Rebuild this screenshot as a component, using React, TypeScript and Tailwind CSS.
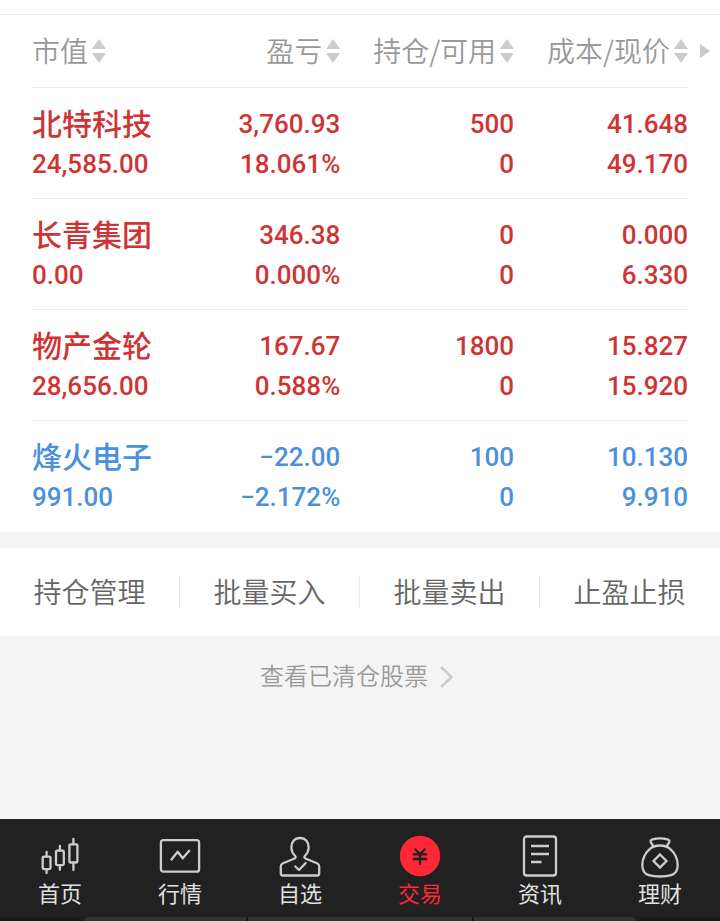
import type { ReactNode } from "react";

type Pair = [string, string];

interface Holding {
  name: string;
  value: string;
  profit: Pair;
  position: Pair;
  price: Pair;
  down?: boolean;
}

const holdings: Holding[] = [
  { name: "北特科技", value: "24,585.00", profit: ["3,760.93", "18.061%"], position: ["500", "0"], price: ["41.648", "49.170"] },
  { name: "长青集团", value: "0.00", profit: ["346.38", "0.000%"], position: ["0", "0"], price: ["0.000", "6.330"] },
  { name: "物产金轮", value: "28,656.00", profit: ["167.67", "0.588%"], position: ["1800", "0"], price: ["15.827", "15.920"] },
  { name: "烽火电子", value: "991.00", profit: ["−22.00", "−2.172%"], position: ["100", "0"], price: ["10.130", "9.910"], down: true },
];

const columns = ["市值", "盈亏", "持仓/可用", "成本/现价"];
const actions = ["持仓管理", "批量买入", "批量卖出", "止盈止损"];

function SortIcon() {
  return (
    <svg width="14" height="24" viewBox="0 0 14 24" fill="#cbcbcb" aria-hidden="true">
      <path d="M7 0 14 10H0z" />
      <path d="M7 24 0 14h14z" />
    </svg>
  );
}

function NavIcon({ children }: { children: ReactNode }) {
  return (
    <svg
      width="44"
      height="44"
      viewBox="0 0 44 44"
      fill="none"
      stroke="#cccccc"
      strokeWidth="2.3"
      strokeLinecap="round"
      strokeLinejoin="round"
      aria-hidden="true"
    >
      {children}
    </svg>
  );
}

const tabs: { label: string; active?: boolean; icon: ReactNode }[] = [
  {
    label: "首页",
    icon: (
      <NavIcon>
        <rect x="4.7" y="22.7" width="7.8" height="12.4" rx="1" />
        <path d="M8.6 18v4.7M8.6 35.1v4" />
        <rect x="18" y="16.7" width="7.8" height="14.4" rx="1" />
        <path d="M21.9 12v4.7M21.9 31.1v4.7" />
        <rect x="31.4" y="10.3" width="8" height="18.2" rx="1" />
        <path d="M35.4 5v5.3M35.4 28.5v7.5" />
      </NavIcon>
    ),
  },
  {
    label: "行情",
    icon: (
      <NavIcon>
        <rect x="2.9" y="6.1" width="38.2" height="31.6" rx="2.5" />
        <path d="M13.5 25.5 19.7 17.8 24.7 24.3 31.2 16.8" />
      </NavIcon>
    ),
  },
  {
    label: "自选",
    icon: (
      <NavIcon>
        <path d="M22 4c-5.200 0-8.600 3.800-8.600 9.200 0 3.400 1.200 6.200 3.400 8.300 1.400 1.400 1 2.600-.8 3.300L5 29.200C3.400 29.900 2.800 30.700 2.800 32.200V39.500c0 1.400.7 2 2 2h34.400c1.300 0 2-.6 2-2V32.200c0-1.500-.6-2.300-2.200-3L28 24.800c-1.800-.7-2.200-1.900-.8-3.300 2.200-2.100 3.400-4.900 3.400-8.300C30.600 7.800 27.200 4 22 4z" />
        <path d="M17.300 32.500 21 36 27.700 29" />
      </NavIcon>
    ),
  },
  {
    label: "交易",
    active: true,
    icon: (
      <NavIcon>
        <circle cx="22" cy="22" r="20.2" fill="#ff2836" stroke="none" />
        <path
          d="M16.800 14.800 22 20.200 27.200 14.800M14.800 20.300h14.400M14.800 25h14.400M22 20.300v10.700"
          stroke="#212121"
          strokeWidth="2.300"
          strokeLinecap="butt"
        />
      </NavIcon>
    ),
  },
  {
    label: "资讯",
    icon: (
      <NavIcon>
        <rect x="6" y="2.500" width="32" height="39" rx="2.500" />
        <path d="M13 12h18M13 20h18M13 28h10.500" strokeLinecap="butt" />
      </NavIcon>
    ),
  },
  {
    label: "理财",
    icon: (
      <NavIcon>
        <path d="M15.500 12.500 12.900 8.300C12.300 7 12.600 6 13.900 5.600c5-1.600 11.200-1.600 16.200 0 1.300.4 1.600 1.400 1 2.700L28.500 12.500" />
        <path d="M22 11.500c-4 0-7 .8-9.500 2.900C7.500 18.500 4.300 25 4.300 31.200c0 5.300 2.200 8.600 6.600 10 3.300 1 7 1.300 11.100 1.300s7.800-.3 11.100-1.300c4.400-1.400 6.600-4.700 6.600-10 0-6.200-3.200-12.700-8.200-16.800-2.500-2.100-5.500-2.900-9.500-2.900z" />
        <path d="M22 20.500 28.500 27 22 33.500 15.500 27z" strokeLinejoin="miter" />
      </NavIcon>
    ),
  },
];

function NumberCell({ pair }: { pair: Pair }) {
  return (
    <>
      <span className="block">{pair[0]}</span>
      <span className="block">{pair[1]}</span>
    </>
  );
}

function HoldingsTable() {
  return (
    <table className="w-full table-fixed border-separate border-spacing-0">
      <colgroup>
        <col className="w-[20%]" />
        <col className="w-[27%]" />
        <col className="w-[26.5%]" />
        <col className="w-[26.5%]" />
      </colgroup>
      <thead>
        <tr>
          {columns.map((label, i) => (
            <th key={label} scope="col" className="h-[73px] border-b border-[#ebebeb] p-0 font-[350]">
              <button
                type="button"
                className={`relative flex w-full items-center gap-1 text-[28px] leading-10 whitespace-nowrap text-[#999] ${i === 0 ? "" : "justify-end"}`}
              >
                <span className="pb-0.5">{label}</span>
                <SortIcon />
                {i === columns.length - 1 && (
                  <svg className="absolute -right-[22px]" width="10" height="14" viewBox="0 0 10 14" fill="#cbcbcb" aria-hidden="true">
                    <path d="M0 0 10 7 0 14z" />
                  </svg>
                )}
              </button>
            </th>
          ))}
        </tr>
      </thead>
      <tbody>
        {holdings.map((h) => (
          <tr
            key={h.name}
            className={`group text-right font-[Roboto,'Noto_Sans_CJK_SC',sans-serif] text-[26px] leading-10 font-medium ${h.down ? "text-[#4a90dc]" : "text-[#cf3434]"}`}
          >
            <td className="border-b border-[#ebebeb] px-0 pt-4 pb-[14px] text-left group-last:border-transparent">
              <span className="block pb-1 font-['Noto_Sans_CJK_SC',sans-serif] text-[30px] leading-9 whitespace-nowrap">{h.name}</span>
              <span className="block">{h.value}</span>
            </td>
            {[h.profit, h.position, h.price].map((pair, i) => (
              <td key={i} className="border-b border-[#ebebeb] px-0 pt-4 pb-[14px] group-last:border-transparent">
                <NumberCell pair={pair} />
              </td>
            ))}
          </tr>
        ))}
      </tbody>
    </table>
  );
}

export default function App() {
  return (
    <div className="flex min-h-screen flex-col bg-[#f4f4f4] font-['Noto_Sans_CJK_SC',sans-serif]">
      <main className="flex-1">
        <section className="bg-white pt-[14px]">
          <div className="border-t border-[#ebebeb] px-8">
            <HoldingsTable />
          </div>
        </section>

        <section className="mt-4 grid grid-cols-4 bg-white py-7">
          {actions.map((label) => (
            <button
              key={label}
              type="button"
              className="h-8 border-r border-[#ebebeb] pb-0.5 text-[28px] leading-[30px] font-[350] whitespace-nowrap text-[#666] last:border-transparent"
            >
              {label}
            </button>
          ))}
        </section>

        <div className="flex justify-center pt-5">
          <a href="#cleared" className="flex items-center gap-2 text-2xl leading-[38px] font-[350] text-[#999]">
            <span className="pb-0.5">查看已清仓股票</span>
            <svg width="24" height="24" viewBox="0 0 24 24" fill="none" stroke="#cbcbcb" strokeWidth="2.500" aria-hidden="true">
              <path d="M5 3 15.500 13 5 23" />
            </svg>
          </a>
        </div>
      </main>

      <nav className="bg-[#212121] pt-[15px]">
        <div className="grid grid-cols-6 pb-[11px]">
          {tabs.map((tab) => (
            <a
              key={tab.label}
              href="#tab"
              aria-current={tab.active ? "page" : undefined}
              className={`flex flex-col items-center text-[22px] leading-7 ${tab.active ? "text-[#ff2836]" : "text-[#e0e0e0]"}`}
            >
              {tab.icon}
              {tab.label}
            </a>
          ))}
        </div>
        <div className="flex h-1 gap-0.5 bg-[#1c191a]">
          <span className="w-[82px]" />
          <span className="flex-1 rounded-tl-sm bg-[#333132]" />
          <span className="w-[224px] bg-[#333132]" />
          <span className="flex-1 rounded-tr-sm bg-[#333132]" />
          <span className="w-[82px]" />
        </div>
      </nav>
    </div>
  );
}
